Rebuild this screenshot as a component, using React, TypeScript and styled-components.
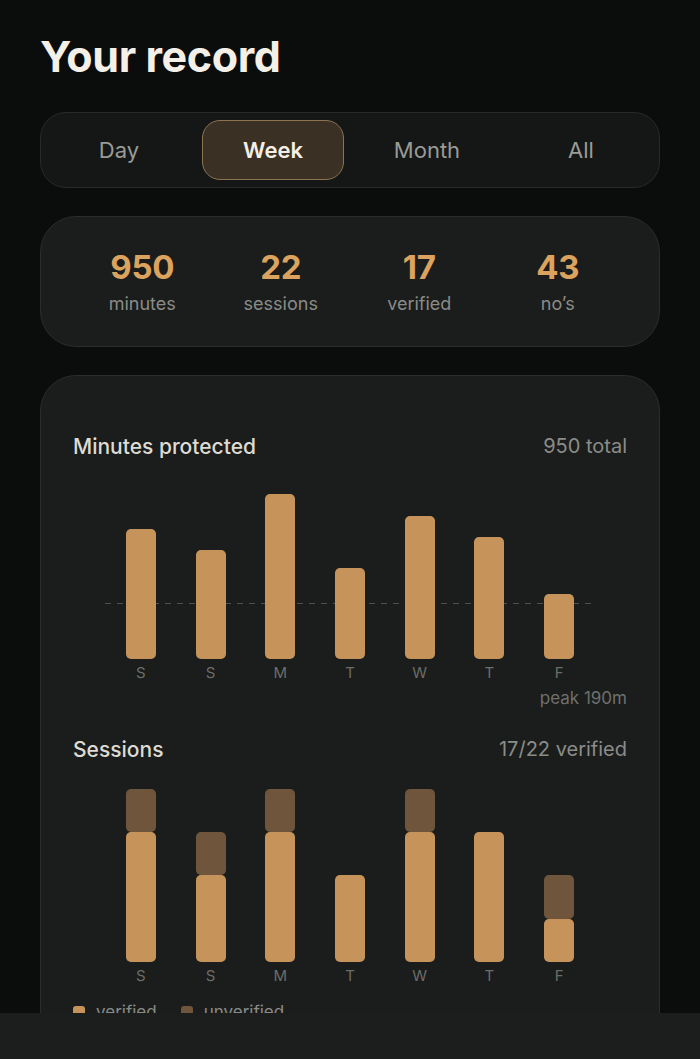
import { useState } from "react";
import styled, { createGlobalStyle } from "styled-components";

const GlobalStyle = createGlobalStyle`
  html, body {
    margin: 0;
    padding: 0;
    background: #0b0c0c;
  }
  body {
    font-family: Inter, "Noto Sans", "Liberation Sans", sans-serif;
    -webkit-font-smoothing: antialiased;
  }
`;

const Page = styled.div`
  display: flex;
  flex-direction: column;
  gap: 28px;
  padding: 32px 40px 80px;
`;

const Title = styled.h1`
  margin: 0 0 4px;
  font-size: 43px;
  line-height: 48px;
  font-weight: 700;
  letter-spacing: -0.4px;
  color: #f4f0e8;
`;

const Segmented = styled.div`
  display: grid;
  grid-template-columns: repeat(4, 1fr);
  padding: 7px 1px;
  border: 1px solid #262a28;
  border-radius: 26px;
  background: #141716;
`;

const Tab = styled.button<{ $active?: boolean }>`
  justify-self: center;
  width: 142px;
  height: 60px;
  border-radius: 18px;
  font-family: inherit;
  font-size: 22px;
  font-weight: ${(p) => (p.$active ? 600 : 400)};
  color: ${(p) => (p.$active ? "#f4efe4" : "#9a9b96")};
  background: ${(p) => (p.$active ? "#3a3024" : "transparent")};
  border: 1.5px solid ${(p) => (p.$active ? "#8c7452" : "transparent")};
  cursor: pointer;
`;

const Card = styled.div<{ $pad: string }>`
  background: #1a1d1c;
  border: 1px solid #2a2d2b;
  border-radius: 36px;
  padding: ${(p) => p.$pad};
`;

const StatsGrid = styled.div`
  display: grid;
  grid-template-columns: repeat(4, 1fr);
`;

const Stat = styled.div`
  display: flex;
  flex-direction: column;
  align-items: center;
  gap: 7px;
`;

const StatValue = styled.div`
  font-size: 33px;
  line-height: 38px;
  font-weight: 700;
  letter-spacing: -0.3px;
  color: #dca35e;
`;

const StatLabel = styled.div`
  font-size: 18px;
  line-height: 22px;
  color: #8a8b87;
`;

const ChartHeader = styled.div`
  display: flex;
  justify-content: space-between;
  align-items: center;
  height: 26px;
`;

const ChartTitle = styled.div`
  font-size: 21px;
  font-weight: 500;
  color: #dedbd3;
`;

const ChartMeta = styled.div`
  font-size: 20px;
  color: #8b8c88;
`;

const Plot = styled.div`
  position: relative;
  height: 200px;
  display: grid;
  grid-template-columns: repeat(7, 1fr);
  padding: 0 33px;
  align-items: end;
`;

const Guide = styled.div<{ $bottom: number }>`
  position: absolute;
  left: 32px;
  right: 31px;
  bottom: ${(p) => p.$bottom}px;
  height: 1.5px;
  background: repeating-linear-gradient(
    to right,
    #4d504e 0 6px,
    transparent 6px 12px
  );
`;

const Column = styled.div`
  position: relative;
  z-index: 1;
  display: flex;
  flex-direction: column;
  align-items: center;
`;

const Bar = styled.div<{ $tone: "verified" | "unverified" }>`
  width: 30px;
  border-radius: 5px;
  background: ${(p) => (p.$tone === "verified" ? "#c6945a" : "#6e553b")};
`;

const DayRow = styled.div`
  display: grid;
  grid-template-columns: repeat(7, 1fr);
  padding: 0 33px;
  margin-top: 5px;
`;

const Day = styled.div`
  text-align: center;
  font-size: 15px;
  line-height: 18px;
  color: #6c6d69;
`;

const Note = styled.div`
  margin-top: 6px;
  text-align: right;
  font-size: 17px;
  line-height: 20px;
  color: #6f706c;
`;

const Section = styled.div<{ $gap: number }>`
  margin-top: ${(p) => p.$gap}px;
`;

const Legend = styled.div`
  display: flex;
  gap: 24px;
  margin-top: 17px;
`;

const LegendItem = styled.div`
  display: flex;
  align-items: center;
  gap: 11px;
  font-size: 17px;
  line-height: 20px;
  color: #8a8b87;
`;

const Swatch = styled.span<{ $color: string }>`
  width: 12px;
  height: 12px;
  border-radius: 3px;
  background: ${(p) => p.$color};
`;

const BottomBar = styled.div`
  position: fixed;
  left: 0;
  right: 0;
  bottom: 0;
  height: 46px;
  background: #1b1e1d;
`;

const days = ["S", "S", "M", "T", "W", "T", "F"];
const minutes = [150, 125, 190, 105, 165, 140, 75];
const sessions = [
  { v: 3, u: 1 },
  { v: 2, u: 1 },
  { v: 3, u: 1 },
  { v: 2, u: 0 },
  { v: 3, u: 1 },
  { v: 3, u: 0 },
  { v: 1, u: 1 },
];

const MAX_BAR = 165;
const UNIT = 43.3;

export default function App() {
  const [range, setRange] = useState("Week");
  const peak = Math.max(...minutes);

  return (
    <>
      <GlobalStyle />
      <Page>
        <Title>Your record</Title>

        <Segmented>
          {["Day", "Week", "Month", "All"].map((r) => (
            <Tab key={r} $active={r === range} onClick={() => setRange(r)}>
              {r}
            </Tab>
          ))}
        </Segmented>

        <Card $pad="31px 32px">
          <StatsGrid>
            {[
              ["950", "minutes"],
              ["22", "sessions"],
              ["17", "verified"],
              ["43", "no’s"],
            ].map(([value, label]) => (
              <Stat key={label}>
                <StatValue>{value}</StatValue>
                <StatLabel>{label}</StatLabel>
              </Stat>
            ))}
          </StatsGrid>
        </Card>

        <Card $pad="57px 32px 80px">
          <ChartHeader>
            <ChartTitle>Minutes protected</ChartTitle>
            <ChartMeta>950 total</ChartMeta>
          </ChartHeader>
          <Plot>
            <Guide $bottom={MAX_BAR / 3} />
            {minutes.map((m, i) => (
              <Column key={i}>
                <Bar
                  $tone="verified"
                  style={{ height: (m / peak) * MAX_BAR }}
                />
              </Column>
            ))}
          </Plot>
          <DayRow>
            {days.map((d, i) => (
              <Day key={i}>{d}</Day>
            ))}
          </DayRow>
          <Note>peak {peak}m</Note>

          <Section $gap={28}>
            <ChartHeader>
              <ChartTitle>Sessions</ChartTitle>
              <ChartMeta>17/22 verified</ChartMeta>
            </ChartHeader>
            <Plot>
              {sessions.map((s, i) => (
                <Column key={i}>
                  {s.u > 0 && (
                    <Bar $tone="unverified" style={{ height: s.u * UNIT }} />
                  )}
                  <Bar $tone="verified" style={{ height: s.v * UNIT }} />
                </Column>
              ))}
            </Plot>
            <DayRow>
              {days.map((d, i) => (
                <Day key={i}>{d}</Day>
              ))}
            </DayRow>
            <Legend>
              <LegendItem>
                <Swatch $color="#c6945a" />
                verified
              </LegendItem>
              <LegendItem>
                <Swatch $color="#6e553b" />
                unverified
              </LegendItem>
            </Legend>
          </Section>
        </Card>
      </Page>
      <BottomBar />
    </>
  );
}
